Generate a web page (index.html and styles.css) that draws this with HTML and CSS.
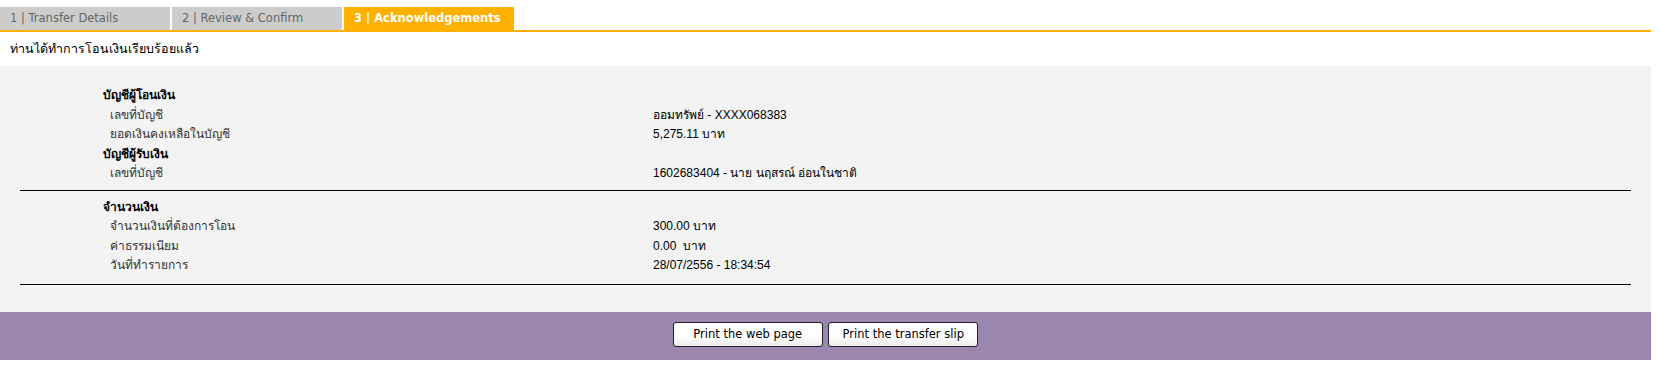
FILE: index.html
```html
<!DOCTYPE html>
<html lang="th">
<head>
    <meta charset="UTF-8">
    <meta name="viewport" content="width=device-width, initial-scale=1.0">
    <title>Transfer - Acknowledgements</title>
    <link rel="stylesheet" href="styles.css">
</head>
<body>
    <div class="page">
        <div class="steps">
            <div class="step">1 | Transfer Details</div>
            <div class="step">2 | Review &amp; Confirm</div>
            <div class="step active">3 | Acknowledgements</div>
        </div>

        <div class="message">ท่านได้ทำการโอนเงินเรียบร้อยแล้ว</div>

        <div class="details">
            <div class="section">
                <div class="heading">บัญชีผู้โอนเงิน</div>
                <div class="row">
                    <div class="label">เลขที่บัญชี</div>
                    <div class="value">ออมทรัพย์ - XXXX068383</div>
                </div>
                <div class="row">
                    <div class="label">ยอดเงินคงเหลือในบัญชี</div>
                    <div class="value">5,275.11 บาท</div>
                </div>
                <div class="heading">บัญชีผู้รับเงิน</div>
                <div class="row">
                    <div class="label">เลขที่บัญชี</div>
                    <div class="value">1602683404 - นาย นฤสรณ์ อ่อนในชาติ</div>
                </div>
            </div>

            <div class="section">
                <div class="heading">จำนวนเงิน</div>
                <div class="row">
                    <div class="label">จำนวนเงินที่ต้องการโอน</div>
                    <div class="value">300.00 บาท</div>
                </div>
                <div class="row">
                    <div class="label">ค่าธรรมเนียม</div>
                    <div class="value">0.00&nbsp; บาท</div>
                </div>
                <div class="row">
                    <div class="label">วันที่ทำรายการ</div>
                    <div class="value">28/07/2556 - 18:34:54</div>
                </div>
            </div>
        </div>

        <div class="actions">
            <button class="btn" type="button">Print the web page</button>
            <button class="btn" type="button">Print the transfer slip</button>
        </div>
    </div>
</body>
</html>
```

FILE: styles.css
```css
body {
    margin: 0;
    background-color: #fff;
    font-family: Tahoma, "DejaVu Sans", "Noto Sans", sans-serif;
    font-size: 11px;
    color: #000;
}

.page {
    width: 1651px;
    padding-top: 7px;
}

.steps {
    display: flex;
    gap: 2px;
    border-bottom: 2px solid #ffb000;
}

.step {
    width: 160px;
    height: 23px;
    line-height: 23px;
    padding-left: 10px;
    background-color: #ccc;
    color: #666;
    font-family: Verdana, "DejaVu Sans", sans-serif;
    font-size: 11.5px;
}

.step.active {
    background-color: #ffb000;
    color: #fff;
    font-weight: bold;
}

.message {
    height: 34px;
    line-height: 34px;
    padding: 0 10px;
    font-size: 12.5px;
}

.details {
    background-color: #f3f3f3;
    padding: 20px 20px 27px;
}

.section {
    border-bottom: 1px solid #000;
    padding-bottom: 6px;
}

.section + .section {
    padding-top: 7px;
    padding-bottom: 8px;
}

.heading {
    line-height: 19.5px;
    padding-left: 83px;
    font-weight: bold;
    font-size: 12px;
}

.row {
    display: grid;
    grid-template-columns: 633px 1fr;
    line-height: 19.5px;
}

.label {
    padding-left: 90px;
    color: #333;
    font-size: 12px;
}

.value {
    font-family: "Microsoft Sans Serif", "Liberation Sans", sans-serif;
    font-size: 12px;
}

.actions {
    background-color: #9b86b0;
    padding: 10px 0 13px;
    text-align: center;
}

.btn {
    width: 150px;
    height: 25px;
    margin: 0 1px;
    border: 1px solid #222;
    border-radius: 3px;
    background: linear-gradient(#fff, #fff 55%, #ececec);
    font-family: Verdana, "DejaVu Sans", sans-serif;
    font-size: 11.5px;
    color: #000;
    cursor: pointer;
}
```
